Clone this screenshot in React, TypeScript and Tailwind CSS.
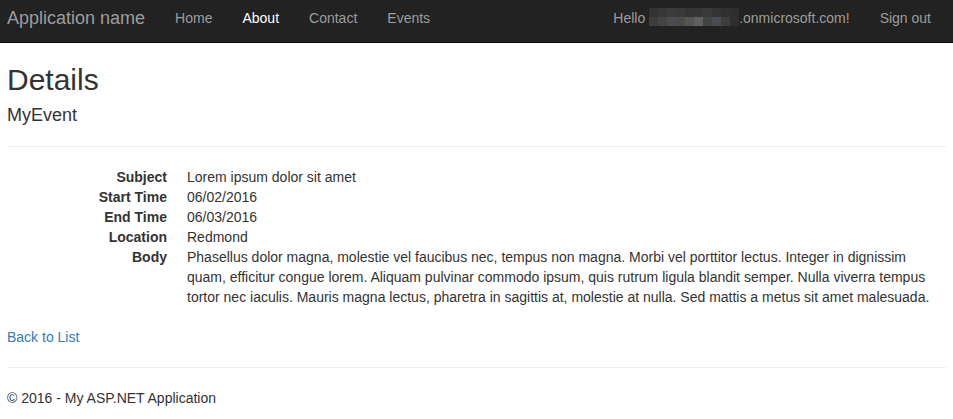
const navLinks = [
  { label: 'Home', active: false },
  { label: 'About', active: true },
  { label: 'Contact', active: false },
  { label: 'Events', active: false },
];

// pixelated mosaic hiding the user name
const mosaicTop = ['#333333', '#383838', '#3a3d40', '#393939', '#353535', '#363636', '#3a3a3a', '#333333', '#303030', '#2e2e2e'];
const mosaicBottom = ['#3c3c3c', '#444444', '#4a4e52', '#4a4a4a', '#555555', '#5f5f5f', '#444444', '#484c50', '#3d3d3d', '#2e2e2e'];

const details = [
  { label: 'Subject', value: 'Lorem ipsum dolor sit amet' },
  { label: 'Start Time', value: '06/02/2016' },
  { label: 'End Time', value: '06/03/2016' },
  { label: 'Location', value: 'Redmond' },
  {
    label: 'Body',
    value:
      'Phasellus dolor magna, molestie vel faucibus nec, tempus non magna. Morbi vel porttitor lectus. Integer in dignissim quam, efficitur congue lorem. Aliquam pulvinar commodo ipsum, quis rutrum ligula blandit semper. Nulla viverra tempus tortor nec iaculis. Mauris magna lectus, pharetra in sagittis at, molestie at nulla. Sed mattis a metus sit amet malesuada.',
  },
];

function Mosaic() {
  return (
    <span className="inline-flex flex-col w-[90px] h-[18px] align-[-4px]">
      <span className="flex h-[9px]">
        {mosaicTop.map((c, i) => (
          <span key={i} className="flex-1" style={{ backgroundColor: c }} />
        ))}
      </span>
      <span className="flex h-[9px]">
        {mosaicBottom.map((c, i) => (
          <span key={i} className="flex-1" style={{ backgroundColor: c }} />
        ))}
      </span>
    </span>
  );
}

export default function App() {
  return (
    <div className="min-h-screen bg-white font-['Liberation_Sans',Arial,sans-serif] text-[14px] leading-[20px] text-[#333]">
      {/* Navbar */}
      <nav className="h-[43px] bg-[#222] border-b border-[#080808] px-[7px] flex justify-between">
        <div className="flex">
          <a className="pt-2 pr-[15px] text-[18px] leading-[20px] text-[#9d9d9d]">Application name</a>
          <ul className="flex">
            {navLinks.map((l) => (
              <li key={l.label}>
                <a className={`block px-[15px] pt-2 ${l.active ? 'text-white' : 'text-[#9d9d9d]'}`}>{l.label}</a>
              </li>
            ))}
          </ul>
        </div>
        <ul className="flex">
          <li>
            <a className="flex items-start px-[15px] pt-2 text-[#9d9d9d]">
              <span className="whitespace-pre">Hello </span>
              <Mosaic />
              <span>.onmicrosoft.com!</span>
            </a>
          </li>
          <li>
            <a className="block px-[15px] pt-2 text-[#9d9d9d]">Sign out</a>
          </li>
        </ul>
      </nav>

      {/* Body content */}
      <main className="px-[7px]">
        <h2 className="mt-[20px] text-[30px] leading-[33px]">Details</h2>
        <h4 className="mt-[10px] text-[18px] leading-[19.8px]">MyEvent</h4>
        <hr className="mt-[20px] border-[#eee]" />

        <dl className="mt-[20px] mb-[20px] grid grid-cols-[160px_1fr] gap-x-[20px]">
          {details.map((d) => (
            <div key={d.label} className="contents">
              <dt className="font-bold text-right">{d.label}</dt>
              <dd>{d.value}</dd>
            </div>
          ))}
        </dl>

        <p>
          <a className="text-[#337ab7]">Back to List</a>
        </p>

        <hr className="mt-[20px] border-[#eee]" />
        <footer className="mt-[20px]">
          <p>© 2016 - My ASP.NET Application</p>
        </footer>
      </main>
    </div>
  );
}
